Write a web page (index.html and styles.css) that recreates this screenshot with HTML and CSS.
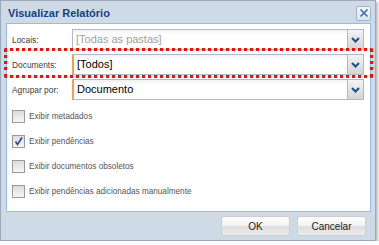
FILE: index.html
```html
<!DOCTYPE html>
<html>
<head>
<meta charset="utf-8">
<link rel="stylesheet" href="styles.css">
</head>
<body>
<div class="win">
  <div class="head">
    <span class="title">Visualizar Relatório</span>
    <span class="close"><svg width="12" height="12" viewBox="0 0 12 12"><path d="M2.5 2.5 L9.5 9.5 M9.5 2.5 L2.5 9.5" stroke="#3d6aa5" stroke-width="1.6" fill="none"/></svg></span>
  </div>
  <div class="panel">
    <div class="row">
      <label class="lbl">Locais:</label>
      <div class="combo">
        <div class="field empty">[Todas as pastas]</div>
        <div class="trig"><svg width="9" height="6" viewBox="0 0 9 6"><path d="M1 1 L4.5 4.5 L8 1" stroke="#1f4f8f" stroke-width="2" fill="none"/></svg></div>
      </div>
    </div>
    <div class="row">
      <label class="lbl">Documents:</label>
      <div class="combo req">
        <div class="field">[Todos]</div>
        <div class="trig"><svg width="9" height="6" viewBox="0 0 9 6"><path d="M1 1 L4.5 4.5 L8 1" stroke="#1f4f8f" stroke-width="2" fill="none"/></svg></div>
      </div>
    </div>
    <div class="row">
      <label class="lbl">Agrupar por:</label>
      <div class="combo req">
        <div class="field">Documento</div>
        <div class="trig"><svg width="9" height="6" viewBox="0 0 9 6"><path d="M1 1 L4.5 4.5 L8 1" stroke="#1f4f8f" stroke-width="2" fill="none"/></svg></div>
      </div>
    </div>
    <div class="checks">
      <div class="chk"><span class="box"></span><span>Exibir metadados</span></div>
      <div class="chk"><span class="box"><svg width="11" height="11" viewBox="0 0 11 11"><path d="M2.5 5.5 L4.5 8.5 L9 1.5" stroke="#25508f" stroke-width="1.6" fill="none"/></svg></span><span>Exibir pendências</span></div>
      <div class="chk"><span class="box"></span><span>Exibir documentos obsoletos</span></div>
      <div class="chk"><span class="box"></span><span>Exibir pendências adicionadas manualmente</span></div>
    </div>
  </div>
  <div class="foot">
    <button class="btn">OK</button>
    <button class="btn">Cancelar</button>
  </div>
  <div class="highlight"></div>
</div>
</body>
</html>
```

FILE: styles.css
```css
html, body { margin: 0; padding: 0; background: #ffffff; }
body { font-family: "Liberation Sans", Arial, sans-serif; }
.win {
  position: relative;
  width: 374px;
  height: 239px;
  border: 1px solid #9aa9bc;
  background: #cfdae7;
  box-shadow: 2px 2px 2px rgba(0,0,0,0.25);
  display: flex;
  flex-direction: column;
}
.head {
  height: 22px;
  display: flex;
  align-items: center;
  justify-content: space-between;
  padding: 0 4px 0 7px;
}
.title {
  font-family: "Liberation Sans", sans-serif;
  font-weight: bold;
  font-size: 11px;
  color: #15428b;
  margin-top: 2px;
}
.close {
  width: 13px;
  height: 13px;
  border: 1px solid #9fb6d3;
  border-radius: 2px;
  background: linear-gradient(#f3f7fb, #dbe5f1);
  display: flex;
  align-items: center;
  justify-content: center;
  margin-top: 2px;
}
.panel {
  margin: 0 4px 0 5px;
  border: 1px solid #99bbe8;
  background: #ffffff;
  padding: 5px 6px 0 5px;
  box-sizing: border-box;
  height: 189px;
}
.row {
  display: flex;
  align-items: center;
  height: 21px;
  margin-bottom: 4px;
}
.lbl {
  width: 60px;
  font-family: "Liberation Sans", sans-serif;
  font-size: 8.4px;
  color: #3d3d3d;
}
.combo {
  flex: 1;
  display: flex;
  height: 21px;
  border: 1px solid #b5b8c8;
  box-sizing: border-box;
  background: linear-gradient(#f0f0f0 0, #ffffff 4px);
}
.combo.req { border-left: 2px solid #f0a050; }
.field {
  flex: 1;
  font-family: "Liberation Sans", sans-serif;
  font-size: 11px;
  line-height: 19px;
  padding-left: 3px;
  color: #000;
  white-space: nowrap;
  overflow: hidden;
}
.field.empty { color: #a0a0a0; }
.trig {
  width: 15px;
  border-left: 1px solid #b5b8c8;
  background: linear-gradient(#f4f4f4, #d4d4d4);
  display: flex;
  align-items: center;
  justify-content: center;
}
.checks {
  margin-top: 4px;
  display: flex;
  flex-direction: column;
}
.chk {
  display: flex;
  align-items: center;
  height: 25px;
  font-family: "Liberation Sans", sans-serif;
  font-size: 8.2px;
  color: #555555;
}
.box {
  width: 11px;
  height: 11px;
  border: 1px solid #9a9a9a;
  background: linear-gradient(#dcdcdc, #f6f6f6);
  margin-right: 4px;
  display: flex;
  align-items: center;
  justify-content: center;
}
.foot {
  display: flex;
  justify-content: flex-end;
  gap: 7px;
  padding: 4px 9px 0 0;
}
.btn {
  width: 69px;
  height: 20px;
  border: 1px solid #c9cfd8;
  border-radius: 3px;
  background: linear-gradient(#ffffff 0, #f2f2f2 50%, #dedede 51%, #ececec 100%);
  font-family: "Liberation Sans", sans-serif;
  font-size: 10px;
  color: #222;
  padding: 0;
}
.highlight {
  position: absolute;
  left: 3px;
  top: 47px;
  width: 363px;
  height: 24px;
  border: 3px dotted #e8140c;
  border-radius: 2px;
}
```
